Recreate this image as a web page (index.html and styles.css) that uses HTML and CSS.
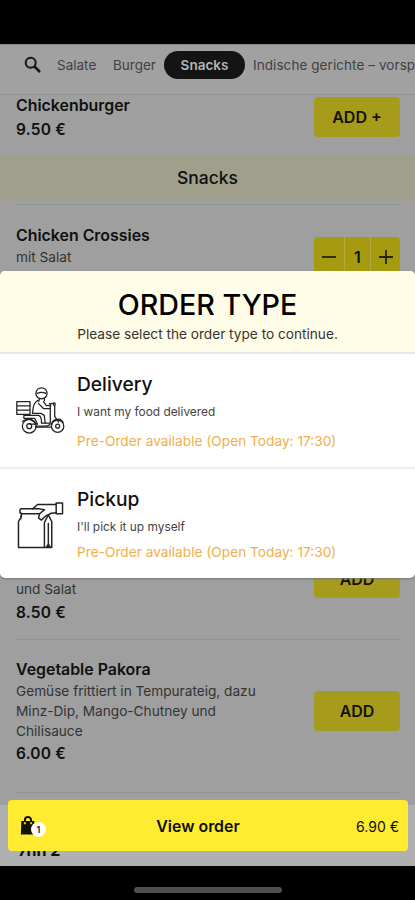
FILE: index.html
```html
<!DOCTYPE html>
<html lang="de">
<head>
<meta charset="utf-8">
<meta name="viewport" content="width=device-width, initial-scale=1">
<title>Order type</title>
<link rel="stylesheet" href="styles.css">
</head>
<body>
<div class="phone">
  <div class="status"></div>
  <main class="app">
    <nav class="tabs">
      <svg class="search" viewBox="0 0 18 18" fill="none" stroke="#141414"><circle cx="6.7" cy="6.7" r="5" stroke-width="2"/><path d="M10.5 10.5 16 16" stroke-width="2.5"/></svg>
      <span class="tab salate">Salate</span>
      <span class="tab burger">Burger</span>
      <span class="tab active">Snacks</span>
      <span class="tab indian">Indische gerichte – vorsp</span>
    </nav>
    <section class="item first">
      <div class="info"><h3>Chickenburger</h3><b class="price">9.50 €</b></div>
      <button class="add">ADD +</button>
    </section>
    <h2 class="band">Snacks</h2>
    <section class="item crossies">
      <div class="info"><h3>Chicken Crossies</h3><p>mit Salat</p><b class="price">6.90 €</b></div>
      <div class="stepper">
        <span><svg viewBox="0 0 16 16"><path d="M1 8h14"/></svg></span>
        <span>1</span>
        <span><svg viewBox="0 0 16 16"><path d="M1 8h14M8 1v14"/></svg></span>
      </div>
    </section>
    <section class="item salad">
      <div class="info"><p>und Salat</p><b class="price">8.50 €</b></div>
      <button class="add">ADD</button>
    </section>
    <section class="item pakora">
      <div class="info"><h3>Vegetable Pakora</h3><p>Gemüse frittiert in Tempurateig, dazu<br>Minz-Dip, Mango-Chutney und<br>Chilisauce</p><b class="price">6.00 €</b></div>
      <button class="add">ADD</button>
    </section>
    <div class="tail"><b>7nn 2</b></div>
  </main>
  <div class="home"><i></i></div>

  <div class="cart">
    <div class="bag">
      <svg viewBox="0 0 18 22"><path d="M1.500 6H16L17 21H1Z" fill="#141100"/><path d="M5.500 7V5a3.500 3.500 0 0 1 7 0V7" fill="none" stroke="#141100" stroke-width="2.200"/><circle cx="5.500" cy="8.500" r="1.300" fill="#d8c82a"/><circle cx="12.500" cy="8.500" r="1.300" fill="#d8c82a"/></svg>
      <em>1</em>
    </div>
    <strong>View order</strong>
    <span class="total">6.90 €</span>
  </div>

  <div class="dialog">
    <header><h1>ORDER TYPE</h1><p>Please select the order type to continue.</p></header>
    <div class="option delivery">
      <svg class="icon" viewBox="0 0 50 48" fill="none" stroke="#222" stroke-width="1.300" stroke-linejoin="round" stroke-linecap="round">
        <path d="M.8 15h13.500v13H.8zM.8 19.300h13.500M.8 23.600h13.500"/>
        <circle cx="26" cy="6.500" r="5.700"/><path d="M21.500 6.500q5-2 9 0M24 12l-1 3M29 11v3"/>
        <path d="M22.500 13.500q-4 2-5 8l-.7 5.500h9l3 2 1 8M23 17l5 5h7M28 15l3 4h4.500"/>
        <path d="M8 29h15q3 1 3 6v2h8M8 29v3h11l3 6H14M6.500 35q8-5 14 3M20 41h16"/>
        <path d="M34 17h4l1.500 3v10l4 6M35 17v20q-1 3-5 3H20M36 39q1-7 9-6l3 3"/>
        <circle cx="13.500" cy="40" r="7"/><circle cx="13.500" cy="40" r="2.500"/>
        <circle cx="42.500" cy="40" r="6.300"/><circle cx="42.500" cy="40" r="2"/>
        <path d="M38 16.500q3-1 1.500 3"/>
      </svg>
      <div class="text"><h2>Delivery</h2><p>I want my food delivered</p><small>Pre-Order available (Open Today: 17:30)</small></div>
    </div>
    <div class="option pickup">
      <svg class="icon" viewBox="0 0 50 48" fill="none" stroke="#222" stroke-width="1.500" stroke-linejoin="round" stroke-linecap="round">
        <path d="M5 7h19l5 1-5 4H6L4 11V8z"/>
        <path d="M5.500 12v3L2.500 20v26.500h34V20L33 13l-4 8v25.500M33 22v24.500M31 46l2-3 2 3M5 17v-3"/>
        <path d="M17 7l5-4.500h19M24 12.500l-1 4 3 2 4-4 6-3 5-.5"/>
        <path d="M41 1h6.500v11H41z"/>
      </svg>
      <div class="text"><h2>Pickup</h2><p>I'll pick it up myself</p><small>Pre-Order available (Open Today: 17:30)</small></div>
    </div>
  </div>
</div>
</body>
</html>
```
FILE: styles.css
```css
* { box-sizing: border-box; }
body, h1, h2, h3, p { margin: 0; }
body { background: #000; font-family: Inter, "Liberation Sans", sans-serif; color: #101010; }
.phone { position: relative; width: 415px; height: 900px; overflow: hidden; display: flex; flex-direction: column; }
.status { flex: 0 0 44px; }
.app { flex: 0 0 822px; overflow: hidden; background: #9f9f9f; display: flex; flex-direction: column; }
.app > * { flex-shrink: 0; }
.tabs { height: 51px; padding: 0 0 9px 24px; display: flex; align-items: center; white-space: nowrap; overflow: hidden; background: #a1a1a1; border-bottom: 1px solid #919191; border-top: 1px solid #8a8a8a; }
.tabs > * { flex-shrink: 0; }
.search { width: 18px; height: 18px; margin-right: 15px; }
.tab { font-size: 13.500px; color: #424242; }
.salate { width: 56px; }
.burger { width: 51px; }
.active { width: 81px; height: 28px; border-radius: 14px; background: #141414; color: #b4b4b4; font-weight: 600; text-align: center; line-height: 28px; margin-right: 8px; }
.indian { letter-spacing: .07px; }
.item { margin: 0 15px 0 16px; display: flex; justify-content: space-between; align-items: center; }
h3, .price { display: block; font-size: 15.900px; line-height: 24px; font-weight: 600; }
.price { font-size: 15.500px; letter-spacing: .2px; }
h3 { padding-top: 1px; height: 24px; }
.item p { font-size: 13.650px; line-height: 20px; color: #333; }
.first { height: 60px; align-items: flex-start; }
.first .info { margin-top: -2px; }
.first .price { margin-top: 1px; }
.first .add { margin-top: 2px; }
.add { width: 86px; height: 40px; border: 0; border-radius: 4px; padding: 0; background: #a69b1b; font: 600 16px Inter, sans-serif; color: #141200; }
.band { height: 45px; line-height: 45px; background: #9f9f8c; text-align: center; font-size: 17.500px; font-weight: 500; margin-bottom: 4px; }
.crossies { height: 107px; border-top: 1px solid #929797; padding-bottom: 2px; }
.stepper { width: 86px; height: 40px; background: #a69b0e; border-radius: 4px; display: grid; grid-template-columns: 30px 26px 30px; overflow: hidden; font-weight: 600; font-size: 16px; }
.stepper span { display: flex; align-items: center; justify-content: center; }
.stepper span + span { border-left: 1px solid #b1a949; }
.stepper svg { width: 16px; height: 16px; stroke: #262200; stroke-width: 1.800; }
.salad { margin-top: 206px; height: 123px; border-bottom: 1px solid #929292; }
.salad .info { align-self: flex-end; margin-bottom: 14px; }
.salad .price { margin-top: 2px; }
.salad .add { padding-top: 2px; }
.pakora { height: 153px; border-bottom: 1px solid #929292; padding-bottom: 9px; }
.pakora .price { margin-top: 1px; }
.pakora .add { margin-top: -2px; }
.tail { margin-top: 12px; height: 61px; background: #b0b0b0; padding: 36px 0 0 18px; line-height: 19px; font-size: 16px; }
.tail b { display: block; }
.home { flex: 0 0 34px; display: flex; justify-content: center; padding-top: 21px; }
.home i { width: 148px; height: 6px; border-radius: 3px; background: #505050; }
.cart { position: absolute; left: 8px; top: 800px; width: 400px; height: 51px; border-radius: 4px; background: #ffec31; display: grid; grid-template-columns: 90px 1fr 90px; align-items: center; padding-top: 2px; }
.bag { position: relative; height: 24px; padding-left: 12px; }
.bag svg { width: 16px; height: 21px; display: block; }
.bag em { position: absolute; left: 23px; top: 7px; width: 15px; height: 15px; border-radius: 50%; background: #fff; font: 600 9px/15px Inter, sans-serif; text-align: center; }
.cart strong { text-align: center; font-size: 15.900px; font-weight: 600; margin-right: 20px; }
.total { text-align: right; padding-right: 9px; font-size: 14px; }
.dialog { position: absolute; left: 0; top: 271px; width: 415px; height: 307px; border-radius: 5px; overflow: hidden; background: #fff; box-shadow: 0 1px 2px #777; }
header { height: 83px; background: #fffde8; border-bottom: 2px solid #e8e8e8; text-align: center; padding-top: 16px; }
h1 { font-size: 28.700px; line-height: 36px; font-weight: 500; color: #000; }
header p { font-size: 13.650px; line-height: 20px; margin-top: 1px; color: #353530; }
.option { display: flex; padding-left: 16px; }
.icon { width: 49px; height: 47px; flex: none; margin: 33px 12px 0 0; }
.delivery { height: 115px; border-bottom: 2px solid #ededed; }
.text h2 { font-size: 19.200px; font-weight: 500; line-height: 26px; margin-top: 17px; }
.text p { font-size: 11.900px; line-height: 18px; margin-top: 6px; color: #444; }
.text small { display: block; font-size: 13.700px; line-height: 20px; margin-top: 10px; color: #eeb04c; }
.pickup small { margin-top: 6px; }
```
